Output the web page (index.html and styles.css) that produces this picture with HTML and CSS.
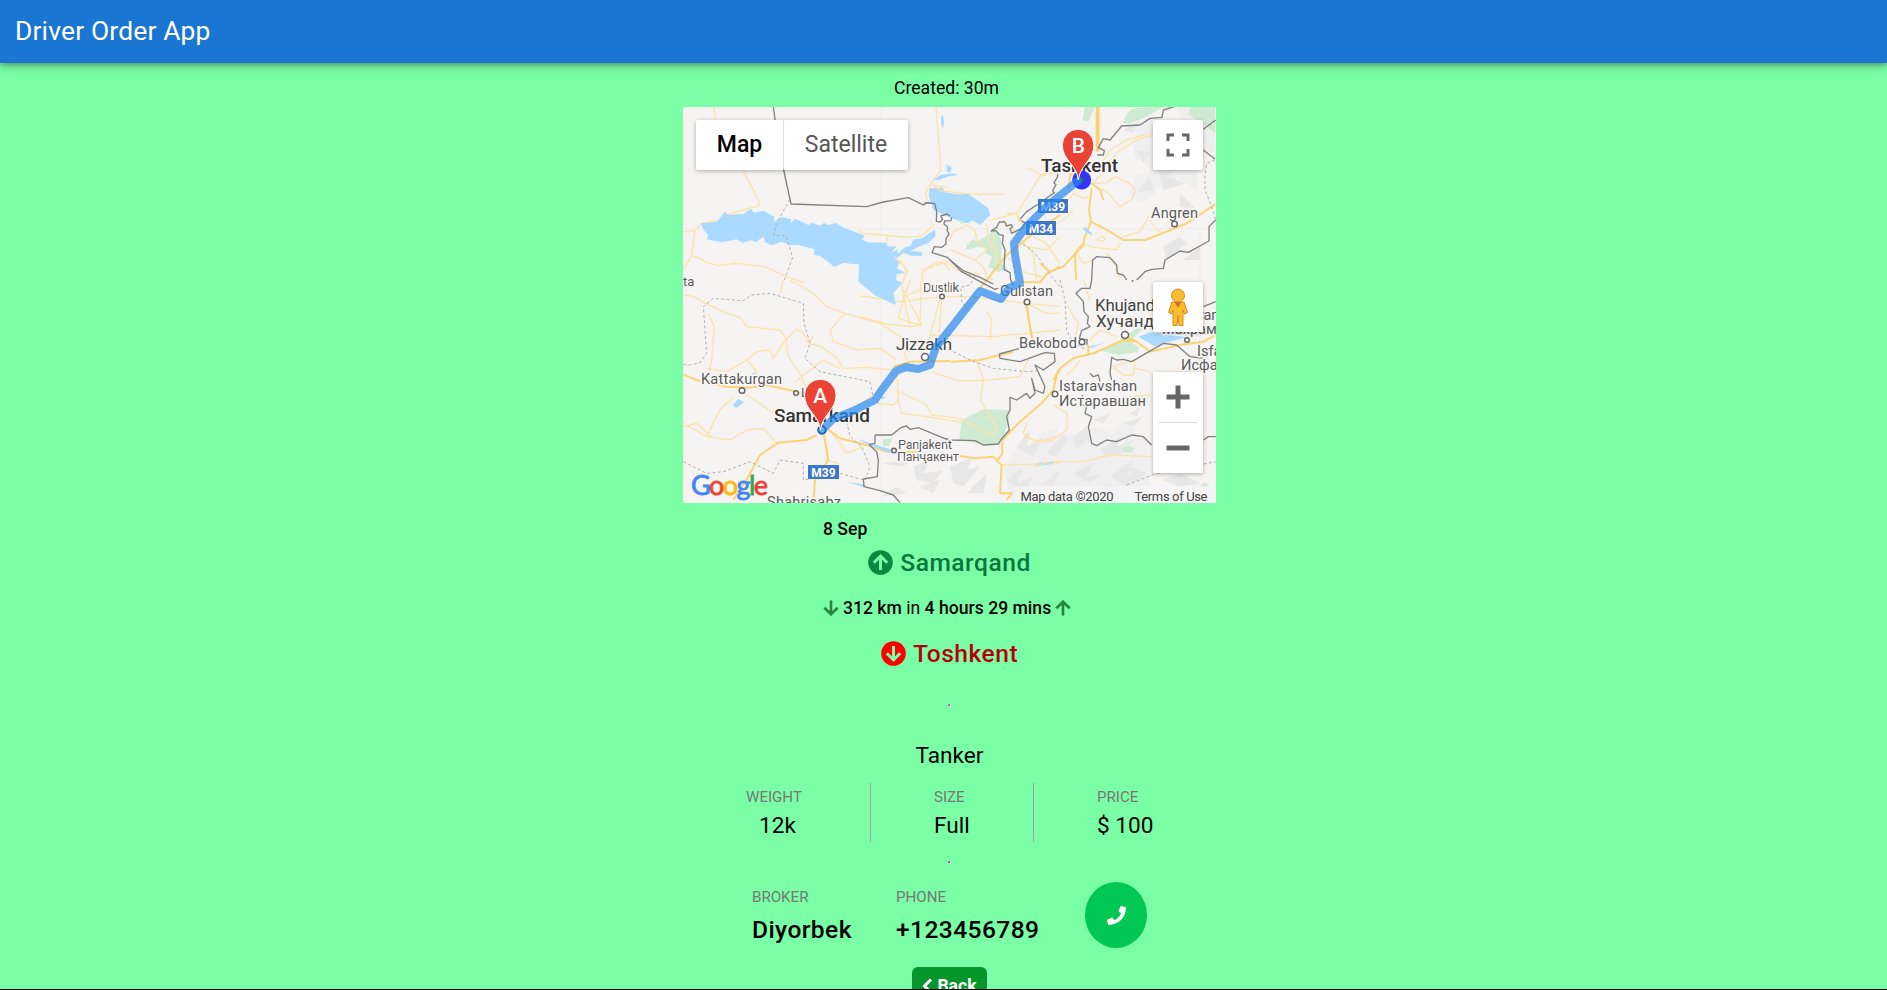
FILE: index.html
```html
<!DOCTYPE html>
<html lang="en">
<head>
<meta charset="utf-8">
<title>Driver Order App</title>
<link rel="stylesheet" href="styles.css">
</head>
<body>
<header class="bar">Driver Order App</header>
<main class="order">
  <p class="created">Created: 30m</p>
  <section class="map">
    <svg class="map-art" viewBox="683 107 533 396">
      <g transform="translate(950 280) scale(.33333)" class="hills">
        <path d="M160 560l50-70 20 30 40-60 60-20-30 50 60-30 40 20 30-40 60 20 30-40 40 20-20 40 50-10 10 190-60-20-30 40-50-30-30 40-60-20-40 40-60-30-40 30-40-10z" class="hill-soft"/>
        <path d="M200 500l40-50-10 50 50-30-30 60zM290 520l50-60 10 20-30 50zM370 470l40-30 10 30-40 40zM450 510l60-40-10 30 50-20-30 40-50 10zM170 600l50-40-20 50 50-20-30 50zM280 610l50-40-20 50zM370 580l60-30-20 40 50-10-40 30zM480 590l70-50-20 50 40-10-40 40zM640 600l50-20 60 30-60 10zM430 420l50-20-20 30zM520 430l60-20-30 30z"/>
        <path d="M540 400l30-20-10 30zM540 560l50 20-40 30zM440 630l30-20 50 20-40 20zM-60 490l50-10 20 30-40 0zM-110 560l50-20-20 40 60-10-30 40-50-10zM0 560l70-30-20 40 40-10-50 60-30-10zM-90 620l60-20-20 40zM50 640l60-60-10 60zM-210 550l90-10-20 20zM-210 650l50-30 30 20z"/>
      </g>
      <g transform="translate(950 60) scale(.33333)" class="hills">
        <path d="M560 190l60-30 0 100 120 60 0 70-60-40-30 40-60-20 10-50-50-30zM560 340l50 10 10 50-50 30-30-30zM680 140l115 0 0 130-60 20z" class="hill-soft"/>
        <path d="M600 210l30-20 0 80zM620 310l60 20-30 20 60 20-70 20zM560 400l40-50 10 40zM690 400l50 50-50-10zM640 560l50-30 20 20-60 50zM700 600l50-40 0 40zM560 270l40 10-20 30zM520 210l50-30-20 40z"/>
      </g>
      <g transform="translate(680 60) scale(.33333)">
        <path class="grid" d="M604 140V1330M10 506H1608M1560 506V1330"/>
        <path class="road" d="M102 140L107 200 150 270 192 335 239 428 236 437 148 462 120 480 66 490 45 511 10 515M45 511L35 586 10 630M35 586L60 595 76 607 115 617 170 610 255 620 320 650 370 668"/>
        <path class="road" d="M768 140L773 210 779 270 782 330 750 375 736 400 744 425M750 377L810 382M533 512L546 520 605 525 680 532 724 529 765 491M620 524L623 546M660 600L683 635 670 660M810 632L788 604 757 614 726 632 727 660"/>
        <path class="water" d="M62 490L110 486 134 455 145 464 190 462 213 446 222 458 250 452 283 470 283 486 306 472 332 478 333 490 345 476 385 495 397 488 418 497 432 489 445 495 468 489 491 503 509 509 555 528 545 538 562 547 620 548 624 560 650 558 632 580 653 567 653 582 675 562 691 558 700 538 725 535 765 509 767 528 745 549 714 562 690 573 727 576 725 588 695 587 671 579 648 596 660 604 650 625 676 639 650 642 648 660 668 668 640 700 645 735 582 703 535 665 537 612 520 613 491 608 463 621 440 602 420 588 403 585 402 567 355 555 330 556 305 545 275 556 255 547 250 530 228 547 214 541 188 548 170 538 125 547 80 538 85 525 71 510z"/>
        <path class="water" d="M748 385L788 384 795 397 875 410 925 445 930 465 900 493 870 478 855 490 815 475 760 450 746 407zM783 168L789 165 792 182 790 205 784 195zM800 312l10 8v17l-10-2zM758 360l25-16 40-4 10 6-25 2-30 12z"/>
        <path class="dash" d="M329 418L290 490 281 526 318 527 338 592 313 660"/>
        <path class="border" d="M280 140L288 200 311 330 333 432 560 440 610 426 685 413 730 435 740 428 764 431"/>
      </g>
      <g transform="translate(860 170) scale(.33333)">
        <path class="green" d="M398 180l17 8 10 30-2 60 22 20-30 8-30-16 10-30-18-10 4-15-30-4-30 8-2-14 40-14 30-20zM328 216l16-10 6 18-22 16-6-10zM295 150l15-4 4 12-12 4z"/>
        <path class="road" d="M214 40L240 62 330 72 437 73M590 0L540 20 470 130 392 150M470 130L478 153M268 215L280 185 320 165 345 180 350 210 380 240 345 270 270 238M345 270L370 290 380 320 400 330M380 160L385 210 400 240M400 190L410 280M190 300L260 275 290 300 330 315 360 310M190 300L180 360 130 380M0 378L120 395 245 380 330 380 500 400 600 410M245 385L238 490M105 260L140 300 125 350 150 470 80 462 0 440M125 350L185 465 150 470M210 495L400 500 600 480M380 425L395 450 390 510M430 150L460 180 500 230 560 240 600 200M490 220L520 250 530 330M540 170L520 200 560 220 600 280M500 400L560 430 600 430M440 260L500 310 550 320"/>
        <path class="highway" d="M600 135L520 190 440 255 362 352M520 525L505 440 500 398M480 336L540 337 562 310 600 290"/>
        <path class="dash" d="M475 215L515 240 545 275 575 320 600 350M345 318L330 345 302 352 306 400 325 412 350 380"/>
        <path class="border" d="M190 104L198 98 224 101 230 125 229 154 240 156 248 148 242 138 262 132 275 142 273 152 254 153 252 162 262 170 262 182 267 192 258 205 258 222 245 232 223 230 216 248 262 262 305 305 370 340 405 358 415 354M594 5L592 22 582 38 588 44 578 62 583 68 535 102 500 125 478 150 495 158 486 175 455 190 450 176 458 170 454 164 439 168 435 156 418 156 410 172 393 183 408 182 418 194 430 196 427 220 435 240 432 298 450 308 452 330 460 345"/>
      </g>
      <g transform="translate(950 60) scale(.33333)">
        <path class="green" d="M405 140h30l-20 45-18-5zM530 160l20-15 90-5-50 30-50 20-20 0zM720 140h75v80l-30-25-50-30z"/>
        <path class="highway wide" d="M443 140V275"/>
        <path class="road" d="M610 225L560 240 510 270 465 320 450 345 430 370 470 368 495 350 540 370 557 390 545 420 510 440 470 395 432 375M430 330L455 310 480 270 530 240 600 220M270 345L250 330 230 325M270 345L330 335 370 345M355 420L370 400 400 415 420 410M220 500L200 460 172 460M520 530L570 515 600 465M400 550L420 560 500 570 512 548M380 580L400 610 430 600M300 500L340 480 370 450M440 540l15-12 12 8-10 8zM470 580L500 620 510 660M640 520L620 510 600 480"/>
        <path class="highway" d="M425 385L417 450 423 485 480 515 520 540 585 540 650 515 710 490 797 432M423 485L405 530 400 550 375 580 378 660M405 550L340 620 300 635 270 610M425 370L450 390 460 420M355 385L360 350 390 310"/>
        <path class="water" d="M398 508l8-6 20 18-3 6zM0 404L55 402 95 430 122 462 92 495 68 479 55 490 0 470zM0 315l5 10-5 15z"/>
        <path class="dash" d="M795 300L770 310 765 345 765 390 785 440 797 480"/>
        <path class="border" d="M672 140L640 150 636 172 600 175 570 195 515 198 480 240 460 236 445 263 463 272 460 285 442 285M797 180L760 208M760 270L795 298M797 480L777 500 777 543 715 577 690 573 645 600 640 625 605 628 585 635 560 660M425 660L428 600 440 590 480 593 500 615 502 640 520 645 530 660"/>
        <path class="border" d="M0 600L40 632 90 652 130 672"/>
      </g>
      <g transform="translate(680 280) scale(.33333)">
        <path class="road" d="M10 45L40 50 76 70 140 100 180 112 200 140 300 150 318 175 325 230 360 280 380 330M84 100L103 140 95 240 80 300M80 265L140 275 200 240 230 215 270 210 280 235 318 178 350 148 372 160 385 190 425 200 470 235 490 265 560 262 640 270M310 0L300 40M400 165L385 200M330 0L400 40 440 80 495 100 450 150 460 185 530 210 600 205 650 240M495 100L600 130 660 170 680 240M690 0L670 60 655 115 720 135 725 0M780 55L755 150 735 225M345 305L430 240 480 265M160 350L120 390 90 450 80 470 10 430M80 470L150 480 200 450 250 445 290 490M250 320L220 260 200 240M175 330L240 370 280 400M250 320L300 310M650 270L655 360 665 400 740 410 830 425 900 440M590 370L640 375 655 360M445 500L440 540 475 550M450 450L480 490 500 520 550 500M530 380L640 300M10 440L50 430 95 470"/>
        <path class="highway" d="M10 283L50 300 140 320 210 323 260 315 350 335 400 355M410 465L380 480 295 488 240 525 205 590 160 660M432 465L445 540 405 600 400 668M440 445L480 475 560 495 620 515 720 515M640 260L690 245 810 243M812 245L900 240 1000 215"/>
        <path class="water" d="M175 357l18 10-25 17-10-8zM535 0h95l18 73-60-25zM590 345l30 8-15 4zM530 476l110 35-6 8-60-20zM500 605l60 10-10 6zM215 278l14 2-10 5z"/>
        <path class="green" d="M610 478l28-4-12 25-17 0z"/>
        <path class="dash" d="M10 253L30 255 60 248 80 220 70 80 100 55 190 62 215 45 270 40 370 70 372 130 390 190 375 235 420 275 570 305 580 355M500 425L510 470 545 500 570 560 555 600M10 545L80 580 130 575 210 545 280 580 300 540 370 550 370 600 400 595M480 580L550 600"/>
        <path class="border" d="M585 465L635 465 662 443 680 438 690 448 715 443 800 478M585 465L585 490 568 494 590 515 595 540 592 590 550 597 552 620 600 632 640 645 660 668"/>
      </g>
      <g transform="translate(860 340) scale(.33333)">
        <path class="green" d="M305 240l65-32 75 2 2 30-10 30-17 45-58-2-64-15z"/>
        <path class="road" d="M108 150L200 195 215 225 300 235 400 290 410 260M350 62L370 120 362 180 410 262M215 95L290 122 370 122 480 110 510 50M500 280L495 290 540 305 600 285M425 375L600 370"/>
        <path class="highway" d="M300 348L345 355 400 350 412 362 427 340 427 300 480 245 545 190 580 150 590 105 600 90M410 362L425 375 420 460 455 460 440 480"/>
        <path class="dash" d="M280 35L330 60 400 85 500 95 530 93"/>
        <path class="border" d="M258 296L270 300 345 302 370 315 415 312 422 300 448 270 440 230 450 210 450 172 470 180 500 160 510 175 525 160 515 115 525 150 550 160 555 140 525 75 550 90 585 65 583 40 555 38 480 65 420 55 418 42 480 25"/>
      </g>
      <g transform="translate(950 280) scale(.33333)">
        <path class="green" d="M430 225l80-45 50-35 20 0-40 40 25 15 0 15-60 10-60-15zM515 505l20-8 18 8-10 14-20-2zM745 620l20-14 15 14z"/>
        <path class="water" d="M410 200l60-12-50 16zM565 170l35-13 110 15-45 12-50 15zM250 560l20-12 60-5-30 10z"/>
        <path class="road" d="M230 430L220 460 250 482 300 485 350 450 352 400 310 375M350 285L370 270 390 240M490 260L555 240 550 285 520 285 500 270zM555 265L600 275M400 365L600 345M350 75L385 130 375 180M250 560L300 545 400 545 480 525 600 530M420 180L450 150 500 170M400 0L420 60"/>
        <path class="highway" d="M228 70L245 170M415 195V225M310 300L330 265 370 235 430 220 520 180 560 185 600 215 690 195 760 185 797 165M530 170L560 185"/>
        <path class="dash" d="M330 0L345 60 350 150 370 190 410 210M530 615L620 580 797 545"/>
        <path class="border" d="M425 0L420 25 395 25 378 40 400 65 402 95 415 110 412 130 420 140 395 152 388 175 412 180 410 195M550 0L545 5M485 300L480 280 485 232 500 240 520 238 545 245 640 190 680 195 720 230 760 235M420 280L430 290 445 285 450 305M760 80L797 65M398 345L390 370 410 380 405 400 425 410 415 440 425 490 440 497 470 480 500 485 545 465 580 470 605 495M760 480L775 470 797 470"/>
      </g>
      <g class="halo">
        <text x="683" y="286" class="town s12">ta</text>
        <text x="1041" y="172" class="city" textLength="77">Tashkent</text>
        <text x="1151" y="218" class="town s14" textLength="47">Angren</text>
        <text x="923" y="292" class="town s12" textLength="36">Dustlik</text>
        <text x="1000" y="296" class="town s14" textLength="53">Gulistan</text>
        <text x="896" y="350" class="town s16" textLength="56">Jizzakh</text>
        <text x="1019" y="348" class="town s14" textLength="58">Bekobod</text>
        <text x="1095" y="311" class="town s16" textLength="60">Khujand</text>
        <text x="1096" y="327" class="town s16" textLength="58">Хучанд</text>
        <text x="1170" y="320" class="town s14">Mahram</text>
        <text x="1162" y="334" class="town s14">Махрам</text>
        <text x="1197" y="356" class="town s14">Isfara</text>
        <text x="1181" y="370" class="town s14">Исфара</text>
        <text x="701" y="384" class="town s14" textLength="81">Kattakurgan</text>
        <text x="801" y="397" class="town s12">Loish</text>
        <text x="774" y="422" class="city" textLength="96">Samarkand</text>
        <text x="1059" y="391" class="town s14" textLength="78">Istaravshan</text>
        <text x="1059" y="406" class="town s14" textLength="87">Истаравшан</text>
        <text x="898" y="449" class="town s12" textLength="54">Panjakent</text>
        <text x="897" y="461" class="town s12" textLength="62">Панҷакент</text>
        <text x="767" y="507" class="town s14" textLength="74">Shahrisabz</text>
      </g>
      <g class="stop"><circle cx="1174.500" cy="224" r="2.800"/><circle cx="942" cy="296.500" r="2.300"/><circle cx="1027" cy="302" r="2.800"/><circle cx="925" cy="357" r="3.500"/><circle cx="1082" cy="342" r="2.800"/><circle cx="1125" cy="335" r="3.500"/><circle cx="1187" cy="340" r="2.300"/><circle cx="742" cy="390.500" r="2.800"/><circle cx="796" cy="393" r="2.300"/><circle cx="1055" cy="394" r="2.800"/><circle cx="894" cy="450.500" r="2.300"/></g>
      <g class="shield"><path d="M1038 199h30v14h-30zM1026 221h30v14h-30zM808 465h31v14h-31z"/><text x="1053" y="210.500">M39</text><text x="1041" y="232.500">M34</text><text x="823.500" y="476.500">M39</text></g>
      <circle cx="822" cy="430" r="3.700" class="dot"/>
      <circle cx="1081.700" cy="180" r="9.500" fill="#3333ff"/>
      <circle cx="1082" cy="180" r="3" fill="#335588"/>
      <path class="route" d="M822 430L833 419 853 411 875 400 881 391 896 371 906 367 918 369 930 365 936 347 980 291 1001 299 1009 288 1020 283 1015 255 1014 243 1026 227 1048 205 1078 181"/>
      <g class="pin"><path d="M820.500 430C819 415 804.500 410 804.500 395a15.800 15.800 0 0 1 31.600 0C836.100 410 822 415 820.500 430z"/><text x="820.300" y="403">A</text>
      <path d="M1078.300 180C1077 165 1062.300 160 1062.300 145a15.800 15.800 0 0 1 31.600 0C1093.900 160 1080 165 1078.300 180z"/><text x="1078.300" y="153">B</text></g>
      <path d="M1015 486h201v17h-201z" fill="#f5f5f5" fill-opacity=".75"/>
      <text x="691" y="495" class="google" textLength="77"><tspan class="g-blue">G</tspan><tspan class="g-red">o</tspan><tspan class="g-yellow">o</tspan><tspan class="g-blue">g</tspan><tspan class="g-green">l</tspan><tspan class="g-red">e</tspan></text>
      <text x="1020.500" y="500.500" class="legal" textLength="93">Map data ©2020</text>
      <text x="1134.500" y="500.500" class="legal" textLength="73">Terms of Use</text>
    </svg>
    <div class="types"><button class="type on">Map</button><button class="type">Satellite</button></div>
    <button class="ctl full"><svg width="24" height="24" viewBox="0 0 24 24"><path d="M2 8V2H8M16 2h6v6M22 16v6h-6M8 22H2v-6" fill="none" stroke="#666" stroke-width="3"/></svg></button>
    <button class="ctl person"><svg width="24" height="40" viewBox="0 0 24 40"><g fill="#fbbc2d" stroke="#d28b1e" stroke-width="1"><path d="M6 15h12l3.500 10.500-3 1.500-1.500-4V38.500h-4l-1-10-1 10H7V23l-1.500 4-3-1.500z"/><circle cx="12" cy="8.500" r="6.500"/></g><path d="M8.500 15h7l-3.500 6z" fill="#d9702a"/></svg></button>
    <div class="zoom"><button><svg width="24" height="24" viewBox="0 0 24 24"><path d="M0.500 12h23M12 .5v23" stroke="#666" stroke-width="5"/></svg></button><button><svg width="24" height="24" viewBox="0 0 24 24"><path d="M.5 12h23" stroke="#666" stroke-width="5"/></svg></button></div>
  </section>
  <section class="trip">
    <p class="date">8 Sep</p>
    <h2 class="place from"><svg width="25" height="25" viewBox="0 0 25 25"><circle cx="12.500" cy="12.500" r="12.300" fill="#088a3c"/><path d="M12.500 20V6M5.800 12.700l6.700-6.700 6.700 6.700" class="arrow"/></svg><span>Samarqand</span></h2>
    <p class="distance"><svg width="16" height="16" viewBox="0 0 16 16"><path d="M8 .5v13.500M1.300 7.800L8 14.300l6.700-6.500"/></svg><span><b>312 km</b> in <b>4 hours 29 mins</b></span><svg width="16" height="16" viewBox="0 0 16 16"><path d="M8 15.500V2M1.300 8.200L8 1.700l6.700 6.500"/></svg></p>
    <h2 class="place to"><svg width="25" height="25" viewBox="0 0 25 25"><circle cx="12.500" cy="12.500" r="12.300" fill="red"/><path d="M12.500 5v14M5.800 12.300l6.700 6.700 6.700-6.700" class="arrow"/></svg><span>Toshkent</span></h2>
  </section>
  <hr class="speck first">
  <p class="cargo">Tanker</p>
  <section class="stats">
    <div class="stat weight"><span class="label">WEIGHT</span><span class="value">12k</span></div>
    <div class="stat"><span class="label">SIZE</span><span class="value">Full</span></div>
    <div class="stat"><span class="label">PRICE</span><span class="value">$ 100</span></div>
  </section>
  <hr class="speck">
  <section class="contact">
    <div class="who"><span class="label">BROKER</span><strong>Diyorbek</strong></div>
    <div class="tel"><span class="label">PHONE</span><strong>+123456789</strong></div>
    <button class="call"><svg width="19" height="19" viewBox="0 0 512 512"><path fill="#fff" d="M493.400 24.600l-104-24c-11.300-2.600-22.900 3.300-27.500 13.900l-48 112c-4.200 9.800-1.400 21.300 6.900 28l60.600 49.600c-36 76.700-98.900 140.500-177.200 177.200l-49.600-60.600c-6.800-8.300-18.200-11.100-28-6.900l-112 48C3.900 366.500-2 378.100.600 389.400l24 104C27.100 504.200 36.700 512 48 512c256.100 0 464-207.500 464-464 0-11.200-7.700-20.900-18.600-23.400z"/></svg></button>
  </section>
  <button class="back"><svg width="11" height="16" viewBox="0 0 11 16"><path d="M9 1.500L2.500 8 9 14.500" fill="none" stroke="#fff" stroke-width="3"/></svg>Back</button>
</main>
</body>
</html>
```
FILE: styles.css
```css
* { box-sizing: border-box; }
html, body { height: 100%; }
body { margin: 0; overflow: hidden; background: #7affa7; font: 17.6px/26px Roboto, sans-serif; color: #000; border-bottom: 1px solid #000; }
p, h2 { margin: 0; }
button { border: 0; padding: 0; font-family: inherit; }
.bar { position: relative; height: 63px; padding-left: 15px; background: #1976d2; color: #fff; font-size: 26.4px; letter-spacing: .17px; line-height: 62px; box-shadow: 0 2px 5px rgba(0,0,0,.26), 0 2px 12px rgba(0,0,0,.22); }
.order { width: 533px; height: 926px; margin-left: 683px; overflow: hidden; display: flex; flex-direction: column; align-items: center; }
.order > * { flex: none; }
.created { height: 44px; padding: 12px 6px 0 0; }
.map { position: relative; width: 533px; height: 396px; background: #f5f4f3; }
.map-art { display: block; width: 533px; height: 396px; }
.types { position: absolute; left: 13px; top: 13px; height: 50px; display: flex; box-shadow: 0 1px 4px rgba(0,0,0,.3); border-radius: 2px; }
.type { width: 124px; background: #fff; color: #565656; font-size: 23px; border-radius: 2px; padding-bottom: 1px; }
.type.on { width: 88px; color: #000; font-weight: 500; border-right: 1px solid #ddd; }
.ctl { position: absolute; right: 13px; width: 50px; height: 50px; background: #fff; border-radius: 2px; box-shadow: 0 1px 4px rgba(0,0,0,.3); display: flex; align-items: center; justify-content: center; }
.full { top: 13px; }
.person { top: 175px; }
.zoom { position: absolute; right: 13px; top: 265px; width: 50px; height: 101px; background: #fff; border-radius: 2px; box-shadow: 0 1px 4px rgba(0,0,0,.3); padding: 0 6px; }
.zoom button { display: flex; align-items: center; justify-content: center; width: 38px; height: 50px; background: none; }
.zoom button + button { border-top: 1px solid #ddd; height: 51px; }
.hills { fill: #e7e7e7; }
.hill-soft { fill: #efefef; }
.water { fill: #aadaff; }
.green { fill: #cfead2; }
.road, .highway, .border, .dash, .grid { fill: none; stroke-linejoin: round; }
.road { stroke: #fbe3ab; stroke-width: 4; }
.highway { stroke: #fbd375; stroke-width: 6; }
.wide { stroke-width: 12; }
.border { stroke: #828282; stroke-width: 4; }
.dash { stroke: #b0b0b0; stroke-width: 3; stroke-dasharray: 9 7; }
.grid { stroke: #eaeaea; stroke-width: 2; }
.halo text { paint-order: stroke; stroke: #f8f7f6; stroke-width: 3px; stroke-linejoin: round; }
.town { fill: #5b5b5b; }
.s12 { font-size: 13px; }
.s14 { font-size: 14.6px; }
.s16 { font-size: 17px; fill: #444; }
.city { font-size: 19px; font-weight: 500; fill: #333; }
.stop { fill: #fff; stroke: #666; stroke-width: 1.5; }
.dot { fill: #fff; stroke: #123a66; stroke-width: 2; }
.shield { fill: #3f77c8; }
.shield text { fill: #fff; font-size: 12px; font-weight: 700; text-anchor: middle; }
.route { fill: none; stroke: #2587f0; stroke-opacity: .7; stroke-width: 8; stroke-linejoin: round; stroke-linecap: round; }
.pin path { fill: #ea4335; stroke: #fff; stroke-width: 1; }
.pin text { fill: #fff; font-size: 21px; font-weight: 500; text-anchor: middle; }
.google { font: 27px Lato, sans-serif; stroke-width: .8px; }
.g-blue { fill: #4285f4; stroke: #4285f4; }
.g-red { fill: #ea4335; stroke: #ea4335; }
.g-yellow { fill: #fbbc05; stroke: #fbbc05; }
.g-green { fill: #34a853; stroke: #34a853; }
.legal { font-size: 13px; fill: #444; }
.trip { width: 253px; height: 189px; padding-top: 13px; display: flex; flex-direction: column; }
.date { height: 26px; font-weight: 500; }
.place { display: flex; align-items: center; justify-content: center; gap: 7px; height: 40px; font-size: 24.6px; font-weight: 500; letter-spacing: .5px; }
.place svg { flex: none; }
.place span { padding-top: 2px; }
.from { color: #08783a; }
.to { color: #b5000a; }
.arrow { fill: none; stroke: #7affa7; stroke-width: 3; }
.distance { display: flex; align-items: center; height: 51px; gap: 4px; white-space: nowrap; }
.distance b { font-weight: 500; }
.distance svg { fill: none; stroke: #26843c; stroke-width: 2.6; }
.speck { width: 3px; height: 3px; margin: 19px 0 0; border: 1px solid; border-color: #888 #fff #fff #888; background: #555; }
.speck.first { margin-top: 12px; }
.cargo { height: 76px; padding-top: 36px; font-size: 22.6px; }
.stats { display: flex; width: 480px; height: 59px; margin-left: 13px; }
.stat { display: flex; flex-direction: column; width: 163px; padding: 1px 0 0 63px; border-left: 1px solid #b09aaa; }
.stat.weight { width: 154px; padding-left: 30px; border: 0; }
.weight .value { padding-left: 13px; }
.label { font-size: 15.1px; color: #777; line-height: 26px; }
.value { font-size: 22.6px; line-height: 32px; }
.contact { display: flex; width: 533px; height: 103px; padding: 18px 0 0 69px; }
.contact div { display: flex; flex-direction: column; padding-top: 2px; }
.contact strong { font-size: 24.6px; font-weight: 500; letter-spacing: .4px; line-height: 39px; }
.who { width: 144px; }
.tel { width: 189px; }
.call { width: 62px; height: 66px; border-radius: 50%; background: #00c853; display: flex; align-items: center; justify-content: center; }
.back { width: 75px; height: 38px; border-radius: 6px; background: #06962c; color: #fff; font-size: 17.6px; font-weight: 700; display: flex; align-items: center; justify-content: center; gap: 4px; }
```
